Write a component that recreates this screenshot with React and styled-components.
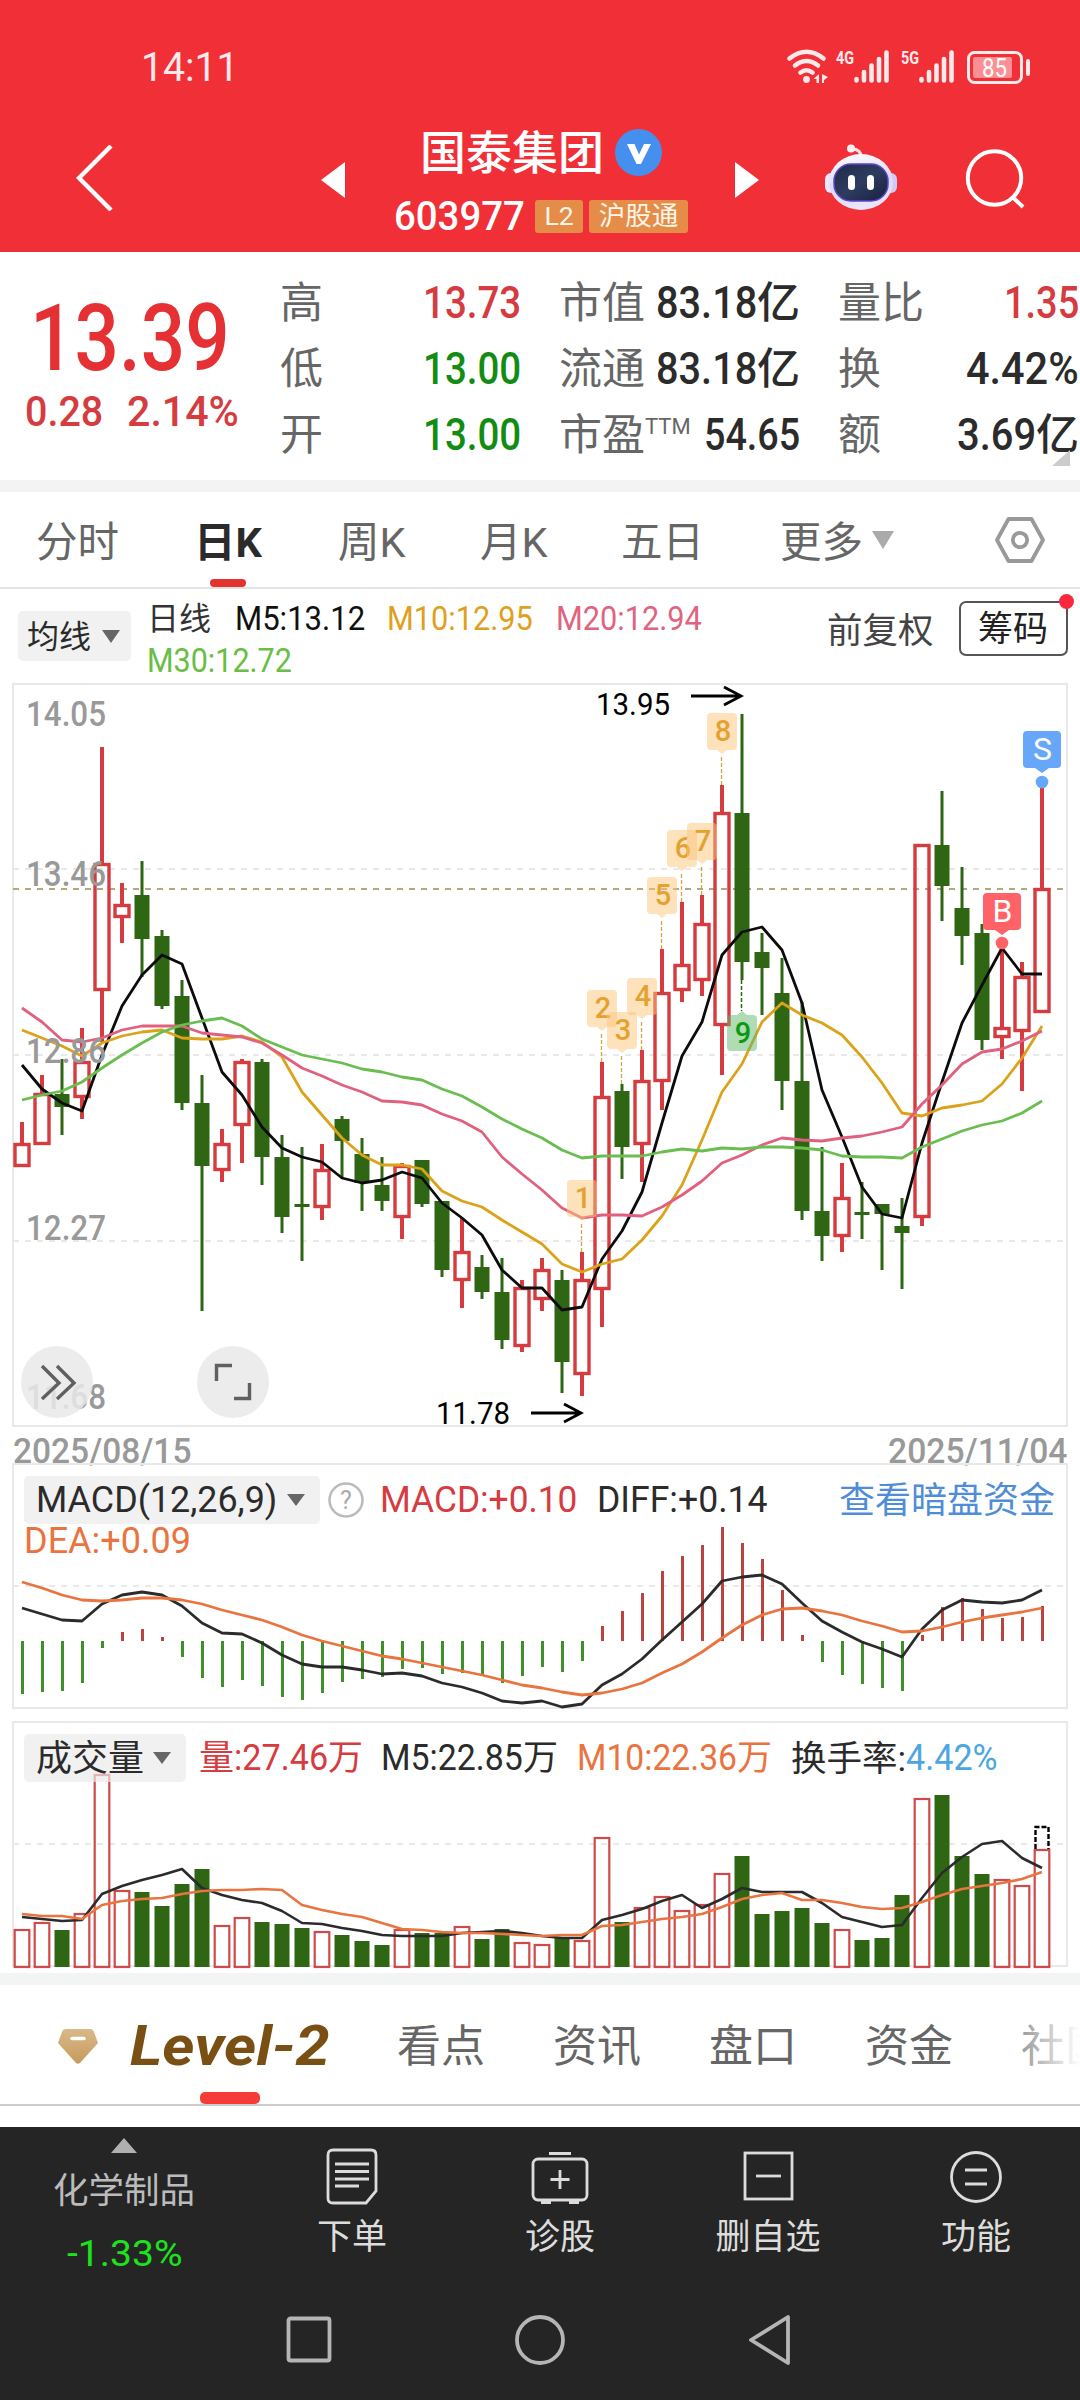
import React, { useLayoutEffect, useRef, useState } from "react";
import styled, { createGlobalStyle } from "styled-components";

const GlobalStyle = createGlobalStyle`
  * { box-sizing: border-box; }
  body {
    margin: 0;
    background: #fff;
    font-family: Roboto, "Noto Sans CJK SC", sans-serif;
    color: #2b2b2b;
  }
  svg { display: block; flex: none; }
  svg text { font-family: Roboto, "Noto Sans CJK SC", sans-serif; }
`;

/* ---------- data ---------- */

const X0 = 22;
const STEP = 20;
const xAt = (i) => X0 + i * STEP;

// [up?, high, body top, body bottom, low]
const candles = [
  [1, 1122, 1143, 1167, 1167], [1, 1075, 1093, 1145, 1145], [0, 1059, 1094, 1107, 1135], [1, 1028, 1061, 1098, 1119],
  [1, 747, 863, 991, 1042], [1, 883, 904, 918, 943], [0, 861, 895, 939, 977], [0, 930, 936, 1006, 1009],
  [0, 980, 996, 1103, 1110], [0, 1075, 1103, 1166, 1311], [1, 1129, 1143, 1171, 1182], [1, 1059, 1061, 1126, 1163],
  [0, 1059, 1062, 1157, 1185], [0, 1135, 1157, 1217, 1233], [0, 1147, 1204, 1207, 1261], [1, 1144, 1169, 1208, 1220],
  [0, 1116, 1119, 1141, 1177], [0, 1138, 1154, 1183, 1211], [0, 1157, 1185, 1201, 1211], [1, 1163, 1165, 1218, 1239],
  [0, 1160, 1160, 1204, 1207], [0, 1201, 1201, 1270, 1277], [1, 1218, 1251, 1281, 1308], [0, 1255, 1267, 1292, 1299],
  [0, 1258, 1292, 1340, 1349], [1, 1280, 1287, 1347, 1352], [1, 1258, 1269, 1300, 1311], [0, 1270, 1280, 1362, 1393],
  [1, 1252, 1279, 1375, 1396], [1, 1062, 1096, 1290, 1327], [0, 1084, 1091, 1147, 1179], [1, 1050, 1080, 1145, 1182],
  [1, 949, 992, 1082, 1110], [1, 902, 964, 991, 1002], [1, 895, 923, 981, 996], [1, 785, 812, 1026, 1075],
  [0, 714, 813, 962, 980], [0, 933, 952, 968, 1015], [0, 958, 993, 1081, 1110], [0, 1002, 1081, 1211, 1220],
  [0, 1147, 1211, 1236, 1261], [1, 1163, 1197, 1237, 1252], [0, 1182, 1212, 1215, 1239], [0, 1204, 1204, 1214, 1270],
  [0, 1198, 1226, 1233, 1289], [1, 844, 844, 1218, 1226], [0, 791, 845, 886, 921], [0, 867, 908, 936, 965],
  [0, 924, 933, 1040, 1050], [1, 945, 1027, 1038, 1059], [1, 962, 976, 1032, 1091], [1, 785, 888, 1013, 1013],
];

const ma5 = [1065, 1089, 1103, 1111, 1055, 1006, 975, 955, 964, 1018, 1072, 1095, 1127, 1148, 1157, 1162, 1178, 1183, 1180, 1172, 1178, 1203, 1218, 1235, 1270, 1288, 1288, 1310, 1307, 1259, 1231, 1192, 1123, 1056, 1022, 955, 932, 927, 950, 1003, 1090, 1137, 1187, 1214, 1218, 1143, 1082, 1023, 985, 948, 974, 974];
const ma10 = [1030, 1038, 1046, 1056, 1043, 1036, 1032, 1030, 1038, 1039, 1039, 1036, 1042, 1057, 1092, 1115, 1138, 1155, 1165, 1165, 1169, 1191, 1201, 1207, 1220, 1232, 1244, 1264, 1272, 1264, 1259, 1240, 1216, 1185, 1140, 1092, 1064, 1022, 1003, 1015, 1023, 1035, 1057, 1083, 1113, 1116, 1108, 1105, 1101, 1084, 1058, 1026];
const ma20 = [1008, 1022, 1040, 1042, 1038, 1030, 1026, 1026, 1026, 1033, 1035, 1037, 1043, 1055, 1068, 1076, 1085, 1092, 1101, 1102, 1105, 1114, 1121, 1132, 1157, 1174, 1190, 1208, 1218, 1215, 1215, 1216, 1207, 1195, 1181, 1163, 1155, 1145, 1138, 1140, 1141, 1138, 1136, 1132, 1127, 1104, 1085, 1064, 1052, 1049, 1041, 1031];
const ma30 = [1100, 1095, 1091, 1082, 1068, 1055, 1043, 1032, 1025, 1021, 1018, 1026, 1039, 1047, 1055, 1059, 1063, 1069, 1072, 1077, 1080, 1089, 1096, 1107, 1119, 1129, 1138, 1150, 1158, 1156, 1156, 1156, 1152, 1149, 1151, 1148, 1149, 1147, 1147, 1148, 1150, 1156, 1157, 1157, 1158, 1147, 1139, 1131, 1125, 1121, 1113, 1101];

const MACD_ZERO = 1641;
const macd = [1694, 1692, 1691, 1683, 1648, 1632, 1629, 1637, 1657, 1678, 1687, 1680, 1686, 1697, 1700, 1693, 1682, 1679, 1677, 1669, 1668, 1674, 1673, 1675, 1683, 1676, 1667, 1672, 1661, 1626, 1611, 1593, 1571, 1556, 1545, 1527, 1543, 1559, 1590, 1635, 1662, 1675, 1684, 1688, 1691, 1635, 1607, 1598, 1609, 1618, 1617, 1606];
const diff = [1608, 1614, 1620, 1621, 1604, 1595, 1592, 1595, 1606, 1623, 1633, 1634, 1643, 1655, 1664, 1667, 1667, 1670, 1674, 1673, 1676, 1683, 1687, 1693, 1701, 1703, 1701, 1707, 1704, 1685, 1674, 1659, 1640, 1622, 1604, 1581, 1577, 1575, 1584, 1603, 1621, 1632, 1642, 1649, 1657, 1629, 1610, 1600, 1602, 1603, 1600, 1590];
const dea = [1582, 1588, 1595, 1600, 1601, 1600, 1598, 1598, 1600, 1604, 1610, 1615, 1620, 1627, 1635, 1641, 1646, 1651, 1656, 1659, 1663, 1667, 1671, 1675, 1680, 1685, 1688, 1692, 1695, 1693, 1689, 1683, 1673, 1664, 1652, 1638, 1625, 1615, 1609, 1608, 1611, 1615, 1621, 1626, 1632, 1631, 1627, 1622, 1618, 1615, 1612, 1608];

const VOL_BASE = 1967;
const volume = [1929, 1922, 1930, 1913, 1774, 1890, 1892, 1906, 1884, 1869, 1925, 1917, 1922, 1924, 1928, 1931, 1935, 1941, 1945, 1929, 1933, 1933, 1926, 1939, 1929, 1942, 1944, 1938, 1940, 1837, 1922, 1907, 1896, 1910, 1904, 1873, 1856, 1914, 1911, 1908, 1923, 1929, 1940, 1938, 1895, 1798, 1795, 1856, 1874, 1879, 1885, 1849];
const vol5 = [1917, 1919, 1921, 1920, 1894, 1886, 1880, 1875, 1869, 1888, 1895, 1900, 1903, 1911, 1923, 1924, 1928, 1931, 1935, 1936, 1936, 1936, 1933, 1932, 1931, 1933, 1936, 1938, 1938, 1920, 1915, 1909, 1901, 1895, 1908, 1899, 1888, 1892, 1892, 1892, 1903, 1917, 1922, 1927, 1925, 1898, 1873, 1857, 1844, 1841, 1858, 1868];
const vol10 = [1914, 1916, 1916, 1919, 1905, 1901, 1899, 1898, 1894, 1891, 1890, 1890, 1889, 1890, 1905, 1910, 1914, 1917, 1923, 1929, 1930, 1932, 1933, 1933, 1934, 1935, 1936, 1935, 1935, 1926, 1925, 1922, 1919, 1917, 1914, 1907, 1899, 1895, 1893, 1900, 1900, 1903, 1907, 1909, 1908, 1902, 1895, 1889, 1886, 1883, 1879, 1872];

// [digit, candle index, tag top, dash end]
const counts = [
  [1, 28, 1180, 1252], [2, 29, 990, 1062], [3, 30, 1012, 1084], [4, 31, 978, 1050],
  [5, 32, 877, 949], [6, 33, 830, 902], [7, 34, 823, 895], [8, 35, 713, 785],
];

const axis = [["14.05", 726], ["13.46", 886], ["12.86", 1063], ["12.27", 1240], ["11.68", 1409]];

const RED = "#d63b3f";
const GREEN = "#2f6614";
const points = (ys) => ys.map((y, i) => `${xAt(i)},${y}`).join(" ");

/* ---------- text ---------- */

const FitBox = styled.span`
  display: block;
  flex: none;
  width: ${(p) => p.$w}px;
  margin-left: ${(p) => p.$ml || 0}px;
  padding-top: 2px;
  font-size: ${(p) => p.$size}px;
  font-weight: ${(p) => p.$weight || 500};
  font-style: ${(p) => p.$style || "normal"};
  line-height: 1.1;
  color: ${(p) => p.$color || "inherit"};
  white-space: nowrap;
`;

const FitInner = styled.span`
  display: inline-block;
  transform-origin: 0 50%;
`;

// Narrow figures: the text is squeezed to the given width
const Fit = ({ w, ml, size, weight, color, fontStyle, children }) => {
  const ref = useRef(null);
  const [scale, setScale] = useState(1);
  useLayoutEffect(() => {
    setScale(w / ref.current.offsetWidth);
  }, [w, children]);
  return (
    <FitBox $w={w} $ml={ml} $size={size} $weight={weight} $color={color} $style={fontStyle}>
      <FitInner ref={ref} style={{ transform: `scaleX(${scale})` }}>{children}</FitInner>
    </FitBox>
  );
};

const Han = styled.span`
  flex: none;
  margin-left: ${(p) => p.$ml || 0}px;
  padding-top: 3px;
  font-size: ${(p) => p.$size}px;
  font-weight: ${(p) => p.$weight || 400};
  line-height: 1.1;
  color: ${(p) => p.$color || "inherit"};
  white-space: nowrap;
`;

/* ---------- layout ---------- */

const Screen = styled.div`
  width: 1080px;
  height: 2400px;
  display: flex;
  flex-direction: column;
  overflow: hidden;
  background: #fff;
`;

const Header = styled.header`
  height: 252px;
  background: #f12f37;
  color: #fff;
`;

const StatusBar = styled.div`
  height: 104px;
  padding: 30px 48px 0 141px;
  display: flex;
  align-items: center;
  justify-content: space-between;
  color: #ffe9ea;
`;

const TitleBar = styled.div`
  height: 148px;
  padding-left: 76px;
  display: flex;
  align-items: center;
`;

const Slot = styled.div`
  flex: none;
  margin-left: ${(p) => p.$ml}px;
  padding-top: ${(p) => p.$pt || 0}px;
`;

const TitleBlock = styled.div`
  width: 294px;
  height: 148px;
  margin-left: 49px;
  padding-top: 19px;
  display: flex;
  flex-direction: column;
  gap: 18px;
`;

const NameRow = styled.div`
  height: 58px;
  display: flex;
  align-items: center;
  justify-content: center;
  gap: 11px;
`;

const CodeRow = styled.div`
  height: 34px;
  display: flex;
  align-items: center;
`;

const Badge = styled.span`
  height: 33px;
  width: ${(p) => p.$w}px;
  margin-left: ${(p) => p.$ml}px;
  display: flex;
  align-items: center;
  justify-content: center;
  border-radius: 3px;
  background: #e58d48;
  color: #fff6ea;
  font-size: 26.5px;
  line-height: 1;
`;

const Quote = styled.section`
  height: 240px;
  display: flex;
  border-bottom: 12px solid #f3f3f3;
`;

const PriceBlock = styled.div`
  flex: none;
  width: 280px;
  padding: 34px 0 0 30px;
  color: #e53034;
`;

const ChangeRow = styled.div`
  display: flex;
  margin: -3px 0 0 -5px;
  color: ${RED};
`;

const Column = styled.div`
  width: 241px;
  margin-right: 38px;
  padding-top: 17px;
  flex: none;
  position: relative;
`;

const Metric = styled.div`
  height: 66px;
  display: flex;
  align-items: center;
  color: ${(p) => p.$color || "#2b2b2b"};
`;

const MetricLabel = styled.span`
  margin-right: auto;
  padding-top: 3px;
  font-size: 43px;
  line-height: 1.1;
  color: #666;
  white-space: nowrap;
`;

const Ttm = styled.sup`
  font-size: 22px;
  line-height: 0;
  vertical-align: 16px;
`;

const Corner = styled.i`
  position: absolute;
  right: 9px;
  bottom: 14px;
  border-left: 18px solid transparent;
  border-bottom: 16px solid #ccc;
`;

const Periods = styled.nav`
  height: 97px;
  padding-left: 36px;
  display: flex;
  align-items: center;
  border-bottom: 2px solid #e3e3e3;
  color: #666;
`;

const Period = styled.div`
  flex: none;
  height: 95px;
  width: ${(p) => p.$w}px;
  display: flex;
  flex-direction: column;
  align-items: flex-start;
  padding-top: 27px;
  font-size: 41.5px;
  line-height: 48px;
  font-weight: ${(p) => (p.$active ? 700 : 400)};
  color: ${(p) => (p.$active ? "#2b2b2b" : "#666")};
`;

const Marker = styled.i`
  width: ${(p) => p.$w}px;
  height: ${(p) => p.$h}px;
  margin: ${(p) => p.$m};
  border-radius: 5px;
  background: #e3332f;
`;

const Down = styled.i`
  flex: none;
  margin-left: ${(p) => p.$ml}px;
  border: solid transparent;
  border-width: ${(p) => p.$h}px ${(p) => p.$w}px 0;
  border-top-color: ${(p) => p.$color || "#666"};
`;

const Averages = styled.div`
  height: 95px;
  padding-left: 18px;
  display: flex;
`;

const Picker = styled.div`
  flex: none;
  width: ${(p) => p.$w}px;
  height: ${(p) => p.$h}px;
  margin-top: ${(p) => p.$mt || 0}px;
  padding-left: ${(p) => p.$pl}px;
  display: flex;
  align-items: center;
  border-radius: 5px;
  background: rgba(235, 235, 235, 0.68);
`;

const Lines = styled.div`
  width: 680px;
  margin-left: 16px;
  padding-top: 8px;
`;

const Line = styled.div`
  height: ${(p) => p.$h}px;
  display: flex;
  align-items: center;
`;

const Chips = styled.div`
  width: 109px;
  height: 55px;
  margin: 12px 0 0 25px;
  display: flex;
  align-items: center;
  justify-content: center;
  position: relative;
  border: 2px solid #555;
  border-radius: 7px;
  color: #222;
`;

const Dot = styled.i`
  position: absolute;
  top: -9px;
  right: -8px;
  width: 15px;
  height: 15px;
  border-radius: 50%;
  background: #fa2a3c;
`;

const Chart = styled.div`
  flex: none;
  position: relative;
  height: ${(p) => p.$h}px;
  margin-top: ${(p) => p.$mt || 0}px;
  & > svg {
    position: absolute;
    left: 0;
    top: 0;
    overflow: visible;
  }
`;

const Legend = styled.div`
  position: relative;
  padding: 12px 25px 0 24px;
`;

const Dates = styled.div`
  height: 38px;
  padding: 5px 13px 0;
  display: flex;
  justify-content: space-between;
`;

const Feature = styled.nav`
  height: 133px;
  margin-top: 6px;
  padding: 3px 0 0 58px;
  display: flex;
  align-items: center;
  position: relative;
  border-top: 12px solid #f3f4f4;
  border-bottom: 2px solid #ccc;
  color: #666;
`;

const FeatureMarker = styled(Marker)`
  position: absolute;
  left: 200px;
  bottom: 0;
  background: #f63c37;
`;

const Fade = styled.i`
  position: absolute;
  right: 0;
  top: 0;
  width: 90px;
  height: 110px;
  background: linear-gradient(90deg, rgba(255, 255, 255, 0), #fff);
`;

const Bottom = styled.footer`
  flex: 1;
  margin-top: 21px;
  background: #252525;
  color: #ddd;
`;

const Actions = styled.div`
  height: 153px;
  display: flex;
`;

const Sector = styled.div`
  width: 248px;
  padding-top: 11px;
  display: flex;
  flex-direction: column;
  align-items: center;
  color: #bbb;
`;

const SectorArrow = styled.i`
  border: solid transparent;
  border-width: 0 13px 15px;
  border-bottom-color: #b0b0b0;
  margin-bottom: 16px;
`;

const Action = styled.div`
  width: 208px;
  padding-top: 20px;
  display: flex;
  flex-direction: column;
  align-items: center;
  gap: 10px;
  font-size: 35px;
  line-height: 45px;
`;

const SystemNav = styled.div`
  height: 120px;
  padding: 0 287px 0 283px;
  display: flex;
  align-items: center;
  justify-content: space-between;
`;

/* ---------- icons ---------- */

const StatusIcons = () => (
  <svg width="248" height="54" viewBox="784 38 248 54" fill="none" stroke="#ffe9ea">
    <g strokeWidth="4.6" strokeLinecap="round">
      <path d="M789.5 56.5 Q806.5 43 823.5 56.5" />
      <path d="M795 63.5 Q806.5 54.5 818 63.5" />
      <path d="M800.5 70.5 Q806.5 66 812.5 70.5" />
    </g>
    <g fill="#ffe9ea" stroke="none">
      <circle cx="806.5" cy="77.5" r="3.4" />
      <path d="M819 72v9h-2.500v-4h-3zM822 72l6 3-4 3v3h-2z" />
      <text x="836" y="62" fontSize="19" fontWeight="700" textLength="18" lengthAdjust="spacingAndGlyphs">4G</text>
      <text x="901" y="62" fontSize="19" fontWeight="700" textLength="18" lengthAdjust="spacingAndGlyphs">5G</text>
    </g>
    <g strokeWidth="4.6" strokeLinecap="round">
      <path d="M856.5 77v1.500M864 70v8.500M871.500 63.500v15M879 57v21.500M886.500 50.500v28" />
      <path d="M921.5 77v1.500M929 70v8.500M936.500 63.500v15M944 57v21.500M951.500 50.500v28" />
    </g>
    <rect x="968.5" y="50.5" width="53" height="30" rx="6" strokeWidth="3" />
    <rect x="973" y="55" width="39" height="21" rx="2" fill="#fb8f94" stroke="none" />
    <path d="M1028 59v13" strokeWidth="4" strokeLinecap="round" />
    <text x="982" y="75" fontSize="25" fill="#fff" stroke="none" textLength="25" lengthAdjust="spacingAndGlyphs">85</text>
  </svg>
);

const Robot = () => (
  <svg width="72" height="68" viewBox="0 0 72 68">
    <defs>
      <linearGradient id="shell" x1="0" y1="0" x2="0.2" y2="1">
        <stop offset="0" stopColor="#fff" />
        <stop offset="0.6" stopColor="#dcd8f8" />
        <stop offset="1" stopColor="#e9e6fb" />
      </linearGradient>
      <linearGradient id="visor" x1="0" y1="0" x2="1" y2="1">
        <stop offset="0" stopColor="#1f2a4a" />
        <stop offset="0.5" stopColor="#2d3c60" />
        <stop offset="1" stopColor="#18203f" />
      </linearGradient>
    </defs>
    <path d="M27 5 Q36 5 36 13" fill="none" stroke="#ffe1e4" strokeWidth="3" />
    <circle cx="26" cy="4.5" r="4" fill="#fff0f2" />
    <rect x="0" y="29" width="14" height="20" rx="6" fill="#e9e7fb" />
    <rect x="58" y="29" width="14" height="20" rx="6" fill="#cfc9f4" />
    <ellipse cx="36" cy="38" rx="32" ry="28" fill="url(#shell)" />
    <rect x="9" y="20" width="54" height="37" rx="17" fill="url(#visor)" stroke="#5a46c8" strokeWidth="1.5" />
    <rect x="23" y="31" width="7" height="15" rx="3.5" fill="#fff" />
    <rect x="42" y="31" width="7" height="15" rx="3.5" fill="#fff" />
  </svg>
);

const Verified = () => (
  <svg width="47" height="47" viewBox="0 0 47 47">
    <circle cx="23.5" cy="23.5" r="23.5" fill="#458fee" />
    <path d="M12 15 H19.500 L24 25.500 L29 15 H36 L26 35 H21.500 Z" fill="#fff" />
  </svg>
);

const Gem = () => (
  <svg width="40" height="36" viewBox="0 0 40 36">
    <defs>
      <linearGradient id="gem" x1="0" y1="0" x2="0" y2="1">
        <stop offset="0" stopColor="#d9b988" />
        <stop offset="1" stopColor="#c69a5c" />
      </linearGradient>
    </defs>
    <path d="M8 1 H32 Q35 1 36 4 L40 15 L22 35 Q20 36.500 18 35 L0 15 L4 4 Q5 1 8 1Z" fill="url(#gem)" />
    <path d="M14 10.500 H26" stroke="#fff" strokeWidth="3.5" strokeLinecap="round" />
  </svg>
);

const actionIcons = {
  order: (
    <>
      <path d="M9 3 H47 Q52 3 52 8 V44 L42 56 H9 Q4 56 4 51 V8 Q4 3 9 3Z" />
      <path d="M11 17H45M11 24.500H45M11 32H45M11 39H35" />
    </>
  ),
  diagnose: (
    <>
      <rect x="1" y="12" width="54" height="41" rx="5" />
      <path d="M28 23V42M18.500 32.500H37.500M17 6.500H39M9 55.500H19M37 55.500H47" />
    </>
  ),
  remove: (
    <>
      <rect x="5" y="6" width="47" height="46" />
      <path d="M16 29H41" />
    </>
  ),
  more: (
    <>
      <circle cx="28" cy="30" r="24.5" />
      <path d="M17 23H39M17 37H39" />
    </>
  ),
};

const ActionIcon = ({ name }) => (
  <svg width="56" height="58" viewBox="0 0 56 58" fill="none" stroke="#dcdcdc" strokeWidth="2.8" overflow="visible">
    {actionIcons[name]}
  </svg>
);

/* ---------- charts ---------- */

const Frame = ({ top, bottom, grid }) => (
  <g fill="none" stroke="#e9e9e9" strokeWidth="2">
    <rect x="13" y={top} width="1054" height={bottom - top} />
    {grid.map((y) => (
      <path key={y} d={`M13 ${y}H1067`} strokeDasharray="6 6" />
    ))}
  </g>
);

const Curve = ({ data, color, width = 2.8 }) => (
  <polyline points={points(data)} fill="none" stroke={color} strokeWidth={width} strokeLinejoin="round" />
);

const Candle = ({ i, bar: [up, high, top, bottom, low] }) => {
  const x = xAt(i);
  if (!up) {
    return (
      <g fill={GREEN}>
        <rect x={x - 1.5} y={high} width="3" height={low - high} />
        <rect x={x - 7.5} y={top} width="15" height={bottom - top} />
      </g>
    );
  }
  return (
    <g fill={RED}>
      <rect x={x - 2} y={high} width="4" height={top - high} />
      <rect x={x - 2} y={bottom} width="4" height={low - bottom} />
      <rect x={x - 7} y={top + 1.5} width="14" height={bottom - top - 3} fill="none" stroke={RED} strokeWidth="3.4" />
    </g>
  );
};

const Count = ({ n, i, top, end }) => {
  const x = xAt(i);
  return (
    <g>
      <path d={`M${x - 0.5} ${top + 44}V${end}`} stroke="#d8a640" strokeWidth="1.3" strokeDasharray="4 2" />
      <path
        d={`M${x - 11} ${top}h22q4 0 4 4v29q0 4-4 4h-6l-5 4l-5-4h-6q-4 0-4-4v-29q0-4 4-4z`}
        fill="#fcc67a"
        fillOpacity="0.5"
      />
      <text x={x + 1} y={top + 28} fontSize="29" fontWeight="500" fill="#e5a130" textAnchor="middle">{n}</text>
    </g>
  );
};

const Tag = ({ x, top, dot, color, letter }) => (
  <g>
    <path d={`M${x - 15} ${top}h30q4 0 4 4v29q0 4-4 4h-8l-7 5l-7-5h-8q-4 0-4-4v-29q0-4 4-4z`} fill={color} />
    <circle cx={x} cy={dot} r="6.3" fill={color} />
    <text x={x + 0.5} y={top + 29} fontSize="32" fill="#fff" textAnchor="middle">{letter}</text>
  </g>
);

const Extreme = ({ x, y, base, label }) => (
  <g>
    <text x={x} y={base} fontSize="31" fill="#000" textLength="74" lengthAdjust="spacingAndGlyphs">{label}</text>
    <path d={`M${x + 95} ${y}h50m-17 -9l17 9l-17 9`} fill="none" stroke="#000" strokeWidth="2.8" />
  </g>
);

const PriceChart = () => (
  <svg width="1080" height="742" viewBox="0 684 1080 742">
    <Frame top={684} bottom={1426} grid={[869, 1055, 1241]} />
    <path d="M13 889H1067" stroke="#b5a878" strokeWidth="2" strokeDasharray="6 6" />
    {candles.map((bar, i) => <Candle key={i} i={i} bar={bar} />)}
    <Curve data={ma5} color="#0c0c0c" />
    <Curve data={ma10} color="#dba21a" />
    <Curve data={ma20} color="#e0607e" />
    <Curve data={ma30} color="#6abd50" />
    {counts.map(([n, i, top, end]) => <Count key={n} n={n} i={i} top={top} end={end} />)}
    <path d="M741.5 980V1011" stroke={GREEN} strokeWidth="1.5" strokeDasharray="4 2" />
    <path d="M731 1015h6l5-4l5 4h6q4 0 4 4v28q0 4-4 4h-22q-4 0-4-4v-28q0-4 4-4z" fill="#5fb86c" fillOpacity="0.5" />
    <text x="743" y="1043" fontSize="29" fontWeight="500" fill="#0a9a12" textAnchor="middle">9</text>
    <Tag x={1042} top={731} dot={782} color="#67a7fa" letter="S" />
    <Tag x={1002} top={893} dot={943} color="#ff6367" letter="B" />
    {axis.map(([label, y]) => (
      <text key={label} x="26" y={y} fontSize="35.5" fontWeight="500" fill="#999" textLength="80" lengthAdjust="spacingAndGlyphs">{label}</text>
    ))}
    <Extreme x={596} y={696} base={715} label="13.95" />
    <Extreme x={436} y={1413} base={1424} label="11.78" />
    <g fill="#e9e9e9" fillOpacity="0.85">
      <circle cx="57" cy="1382" r="36" />
      <circle cx="233" cy="1382" r="36" />
    </g>
    <g fill="none" stroke="#606060" strokeWidth="3.4">
      <path d="M42 1366L59 1383L42 1399M57 1366L74 1383L57 1399" />
      <path d="M232 1365.500H216.500V1381M234 1398.500H249.500V1383" />
    </g>
  </svg>
);

const MacdChart = () => (
  <svg width="1080" height="244" viewBox="0 1464 1080 244">
    <Frame top={1464} bottom={1708} grid={[1586]} />
    {macd.map((y, i) => (
      <path key={i} d={`M${xAt(i) + 0.5} ${MACD_ZERO}V${y}`} stroke={y < MACD_ZERO ? "#b8433f" : "#3f9029"} strokeWidth="3" />
    ))}
    <Curve data={diff} color="#2b2b2b" />
    <Curve data={dea} color="#e9743f" />
  </svg>
);

const VolumeChart = () => (
  <svg width="1080" height="246" viewBox="0 1722 1080 246">
    <Frame top={1722} bottom={1966} grid={[1844]} />
    {volume.map((y, i) =>
      candles[i][0] ? (
        <rect key={i} x={xAt(i) - 7.3} y={y + 1} width="14.6" height={VOL_BASE - y - 1} fill="none" stroke="#cf4a4a" strokeWidth="2.2" />
      ) : (
        <rect key={i} x={xAt(i) - 7.5} y={y} width="15" height={VOL_BASE - y} fill={GREEN} />
      )
    )}
    <path d="M1035.5 1849V1827H1048.500V1849" fill="none" stroke="#000" strokeWidth="2.4" strokeDasharray="5 2" />
    <Curve data={vol5} color="#2b2b2b" width={2.6} />
    <Curve data={vol10} color="#e9743f" width={2.6} />
  </svg>
);

/* ---------- page ---------- */

const Num = (props) => <Fit size={44} {...props} />;
const LegendNum = (props) => <Fit size={36} weight={400} {...props} />;

const App = () => (
  <Screen>
    <GlobalStyle />
    <Header>
      <StatusBar>
        <Fit w={98} size={40} weight={400}>14:11</Fit>
        <StatusIcons />
      </StatusBar>
      <TitleBar>
        <svg width="37" height="66" viewBox="0 0 37 66" fill="none" stroke="#fff" strokeWidth="4.4">
          <path d="M35 1L3 33L35 65" />
        </svg>
        <Slot $ml={208} $pt={4}>
          <svg width="24" height="36"><path d="M0 18L24 0V36Z" fill="#fff" /></svg>
        </Slot>
        <TitleBlock>
          <NameRow>
            <Han $size={46} $weight={500}>国泰集团</Han>
            <Verified />
          </NameRow>
          <CodeRow>
            <Fit w={131} size={41}>603977</Fit>
            <Badge $w={48} $ml={10}>L2</Badge>
            <Badge $w={99} $ml={6}>沪股通</Badge>
          </CodeRow>
        </TitleBlock>
        <Slot $ml={47} $pt={4}>
          <svg width="24" height="36"><path d="M24 18L0 0V36Z" fill="#fff" /></svg>
        </Slot>
        <Slot $ml={66}><Robot /></Slot>
        <Slot $ml={68} $pt={2}>
          <svg width="62" height="60" fill="none" stroke="#fff" strokeWidth="4">
            <circle cx="29.5" cy="29" r="26.7" />
            <path d="M47.5 48L58 58" />
          </svg>
        </Slot>
      </TitleBar>
    </Header>

    <Quote>
      <PriceBlock>
        <Fit w={200} size={92}>13.39</Fit>
        <ChangeRow>
          <Fit w={78} size={43}>0.28</Fit>
          <Fit w={112} ml={24} size={43}>2.14%</Fit>
        </ChangeRow>
      </PriceBlock>
      <Column>
        <Metric $color={RED}><MetricLabel>高</MetricLabel><Num w={98}>13.73</Num></Metric>
        <Metric $color="#138c13"><MetricLabel>低</MetricLabel><Num w={98}>13.00</Num></Metric>
        <Metric $color="#138c13"><MetricLabel>开</MetricLabel><Num w={98}>13.00</Num></Metric>
      </Column>
      <Column>
        <Metric><MetricLabel>市值</MetricLabel><Num w={101}>83.18</Num><Han $size={43} $weight={500}>亿</Han></Metric>
        <Metric><MetricLabel>流通</MetricLabel><Num w={101}>83.18</Num><Han $size={43} $weight={500}>亿</Han></Metric>
        <Metric><MetricLabel>市盈<Ttm>TTM</Ttm></MetricLabel><Num w={96}>54.65</Num></Metric>
      </Column>
      <Column>
        <Metric $color={RED}><MetricLabel>量比</MetricLabel><Num w={75}>1.35</Num></Metric>
        <Metric><MetricLabel>换</MetricLabel><Num w={113}>4.42%</Num></Metric>
        <Metric><MetricLabel>额</MetricLabel><Num w={79}>3.69</Num><Han $size={43} $weight={500}>亿</Han></Metric>
        <Corner />
      </Column>
    </Quote>

    <Periods>
      <Period $w={158}>分时</Period>
      <Period $w={144} $active>日K<Marker $w={36} $h={9} $m="12px 0 0 16px" /></Period>
      <Period $w={142}>周K</Period>
      <Period $w={141}>月K</Period>
      <Period $w={159}>五日</Period>
      <Period $w={83}>更多</Period>
      <Down $ml={9} $w={11} $h={18} $color="#aaa" />
      <Slot $ml={101}>
        <svg width="50" height="46" fill="none" stroke="#999" strokeWidth="3.8" strokeLinejoin="round">
          <path d="M13.5 2H36.500L48 23L36.500 44H13.500L2 23Z" />
          <circle cx="25" cy="23" r="7.2" />
        </svg>
      </Slot>
    </Periods>

    <Averages>
      <Picker $w={113} $h={50} $mt={22} $pl={9}>
        <Han $size={32}>均线</Han>
        <Down $ml={11} $w={9} $h={13} />
      </Picker>
      <Lines>
        <Line $h={42}>
          <Han $size={32} $color="#333">日线</Han>
          <Fit w={130} ml={24} size={33} weight={400} color="#111">M5:13.12</Fit>
          <Fit w={146} ml={22} size={33} weight={400} color="#dfa01e">M10:12.95</Fit>
          <Fit w={146} ml={23} size={33} weight={400} color="#e06480">M20:12.94</Fit>
        </Line>
        <Line $h={42}>
          <Fit w={145} size={33} weight={400} color="#6abd45">M30:12.72</Fit>
        </Line>
      </Lines>
      <Line $h={83}><Han $size={35.5} $color="#444">前复权</Han></Line>
      <Chips><Han $size={35}>筹码</Han><Dot /></Chips>
    </Averages>

    <Chart $h={742}><PriceChart /></Chart>
    <Dates>
      <Fit w={178} size={35} color="#999">2025/08/15</Fit>
      <Fit w={179} size={35} color="#999">2025/11/04</Fit>
    </Dates>

    <Chart $h={244}>
      <MacdChart />
      <Legend>
        <Line $h={48}>
          <Picker $w={296} $h={48} $pl={12}>
            <LegendNum w={241}>MACD(12,26,9)</LegendNum>
            <Down $ml={10} $w={9} $h={12} />
          </Picker>
          <Slot $ml={8}>
            <svg width="36" height="36">
              <circle cx="18" cy="18" r="16.5" fill="none" stroke="#bbb" strokeWidth="2.5" />
              <text x="18" y="27" fontSize="25" fill="#aaa" textAnchor="middle">?</text>
            </svg>
          </Slot>
          <LegendNum w={197} ml={16} color={RED}>MACD:+0.10</LegendNum>
          <LegendNum w={171} ml={20}>DIFF:+0.14</LegendNum>
          <Han $ml={71} $size={36} $color="#4f8dd8">查看暗盘资金</Han>
        </Line>
        <Line $h={34}><LegendNum w={167} color="#ea7440">DEA:+0.09</LegendNum></Line>
      </Legend>
    </Chart>

    <Chart $h={245} $mt={14}>
      <VolumeChart />
      <Legend>
        <Line $h={48}>
          <Picker $w={162} $h={48} $pl={12}>
            <Han $size={36}>成交量</Han>
            <Down $ml={9} $w={9} $h={12} />
          </Picker>
          <Han $ml={13} $size={35} $color={RED}>量</Han>
          <LegendNum w={94} color={RED}>:27.46</LegendNum>
          <Han $size={35} $color={RED}>万</Han>
          <LegendNum w={142} ml={18}>M5:22.85</LegendNum>
          <Han $size={35}>万</Han>
          <LegendNum w={160} ml={19} color="#ea7440">M10:22.36</LegendNum>
          <Han $size={35} $color="#ea7440">万</Han>
          <Han $ml={19} $size={35.5}>换手率:</Han>
          <LegendNum w={92} color="#4da6e0">4.42%</LegendNum>
        </Line>
      </Legend>
    </Chart>

    <Feature>
      <Gem />
      <Fit w={200} ml={32} size={56} weight={700} color="#7a4f14" fontStyle="italic">Level-2</Fit>
      <Han $ml={67} $size={44}>看点</Han>
      <Han $ml={68} $size={44}>资讯</Han>
      <Han $ml={68} $size={44}>盘口</Han>
      <Han $ml={68} $size={44}>资金</Han>
      <Han $ml={68} $size={44}>社区</Han>
      <Fade />
      <FeatureMarker $w={60} $h={12} $m="0" />
    </Feature>

    <Bottom>
      <Actions>
        <Sector>
          <SectorArrow />
          <Han $size={35.5}>化学制品</Han>
          <Slot $ml={0} $pt={21}><Fit w={115} size={37} weight={400} color="#1de31d">-1.33%</Fit></Slot>
        </Sector>
        <Action><ActionIcon name="order" />下单</Action>
        <Action><ActionIcon name="diagnose" />诊股</Action>
        <Action><ActionIcon name="remove" />删自选</Action>
        <Action><ActionIcon name="more" />功能</Action>
      </Actions>
      <SystemNav>
        <svg width="50" height="50" fill="none" stroke="#b5b5b5" strokeWidth="3.8">
          <rect x="5.5" y="3.5" width="41" height="42" rx="2" />
        </svg>
        <svg width="52" height="52" fill="none" stroke="#b5b5b5" strokeWidth="3.8">
          <circle cx="26" cy="26" r="23" />
        </svg>
        <svg width="46" height="52" fill="none" stroke="#b5b5b5" strokeWidth="3.8" strokeLinejoin="round">
          <path d="M4 26L41 3V49Z" />
        </svg>
      </SystemNav>
    </Bottom>
  </Screen>
);

export default App;
